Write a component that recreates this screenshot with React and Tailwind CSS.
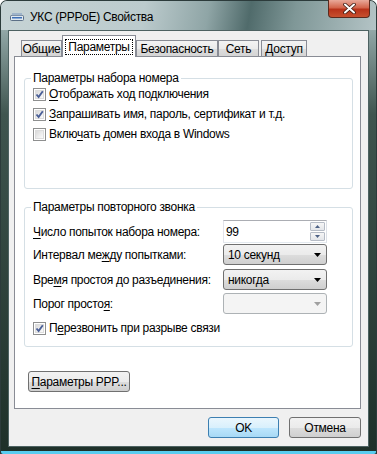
import React from 'react';

// access-key label: underline one letter
const Key = ({ text, at }) => (
  <>
    {text.slice(0, at)}
    <span className="underline underline-offset-[2px]">{text[at]}</span>
    {text.slice(at + 1)}
  </>
);

const Check = ({ checked, label }) => (
  <div className="flex h-5 items-center">
    <div className="flex h-[13px] w-[13px] items-center justify-center border border-[#8e8f8f] bg-white">
      <div className="relative h-[9px] w-[9px] border border-[#dcdcdc] bg-[linear-gradient(135deg,#dadada,#fbfbfb)]">
        {checked && (
          <svg className="absolute -left-[2px] -top-[2px]" width="11" height="11" viewBox="0 0 11 11">
            <path d="M2.5 5.5 L4.6 8 L8.8 2.2" fill="none" stroke="#4a5f97" strokeWidth="1.9" />
          </svg>
        )}
      </div>
    </div>
    <span className="ml-[3px]">{label}</span>
  </div>
);

const Tab = ({ children, active, className = '' }) =>
  active ? (
    <div className={`relative z-10 -mb-px flex h-[22px] items-center justify-center border border-b-0 border-[#898c95] bg-white ${className}`}>
      <span className="border border-dotted border-black px-[2px] leading-[14px]">{children}</span>
    </div>
  ) : (
    <div className={`mt-[5px] flex h-[16px] items-center justify-center border border-b-0 border-[#898c95] bg-[linear-gradient(#f3f3f3,#ebebeb_50%,#dedede_51%,#d4d4d4)] ${className}`}>
      {children}
    </div>
  );

const Combo = ({ value, disabled }) =>
  disabled ? (
    <div className="flex h-[21px] w-[104px] items-center justify-end rounded-[3px] border border-[#adb2b5] bg-[#f4f4f4] pr-[5px]">
      <svg width="7" height="4" viewBox="0 0 7 4"><path d="M0 0H7L3.5 4Z" fill="#a0a0a0" /></svg>
    </div>
  ) : (
    <div className="flex h-[21px] w-[104px] items-center justify-between rounded-[3px] border border-[#707070] bg-[linear-gradient(#f2f2f2,#ebebeb_50%,#dddddd_51%,#cfcfcf)] pl-[4px] pr-[5px]">
      <span>{value}</span>
      <svg width="7" height="4" viewBox="0 0 7 4"><path d="M0 0H7L3.5 4Z" fill="#000" /></svg>
    </div>
  );

const Button = ({ children, primary, className = '' }) => (
  <div
    className={`flex h-[21px] items-center justify-center rounded-[3px] border ${
      primary
        ? 'border-[#3c7fb1] bg-[linear-gradient(#eaf6fd,#d9f0fc_50%,#bee6fd_51%,#a7d9f5)]'
        : 'border-[#707070] bg-[linear-gradient(#f2f2f2,#ebebeb_50%,#dddddd_51%,#cfcfcf)]'
    } ${className}`}
  >
    {children}
  </div>
);

const Spin = () => (
  <div className="flex h-[23px] w-[104px] items-center border border-[#abadb3] border-b-[#e3e9ef] border-l-[#e2e3ea] border-r-[#dbdfe6] bg-white pl-[2px]">
    <span className="flex-1">99</span>
    <div className="mr-[1px] flex flex-col gap-px">
      {[0, 1].map((i) => (
        <div key={i} className="flex h-[9px] w-[15px] items-center justify-center rounded-[1px] border border-[#b6bcc6] bg-[linear-gradient(#f6f6f6,#e4e6ea)]">
          <svg width="5" height="3" viewBox="0 0 5 3">
            <path d={i === 0 ? 'M0 3H5L2.5 0Z' : 'M0 0H5L2.5 3Z'} fill="#4d6185" />
          </svg>
        </div>
      ))}
    </div>
  </div>
);

const Row = ({ label, children, className = '' }) => (
  <div className={`flex items-center justify-between pr-[25px] ${className}`}>
    <span>{label}</span>
    {children}
  </div>
);

export default function App() {
  return (
    <div className="h-[454px] w-[377px] overflow-hidden bg-white font-['Liberation_Sans',Arial,sans-serif] text-[12px] tracking-[-0.3px] text-black">
      <div className="flex h-[454px] w-[377px] flex-col rounded-t-[7px] border border-b-0 border-[#2c3b3b] bg-[linear-gradient(180deg,#b7c7c9_0%,#8aa09f_8%,#3f554f_25%,#1e3029_100%)]">
        {/* title bar */}
        <div className="relative flex h-[29px] shrink-0 items-center rounded-t-[6px] bg-[linear-gradient(100deg,#c6d3d5_0%,#bccbcd_38%,#8fa5a6_55%,#506b6b_66%,#7f9797_78%,#b4c4c6_100%)] pl-[9px]">
          <svg width="14" height="10" viewBox="0 0 14 10" className="mt-[2px]">
            <rect x="0.5" y="3.5" width="13" height="5" rx="1" fill="#dfe8ef" stroke="#5c6f86" />
            <rect x="2" y="1" width="10" height="2.5" fill="#9fb4ca" />
            <rect x="2" y="5" width="10" height="1.5" fill="#3d6fb7" />
          </svg>
          <span className="ml-[6px] mt-[2px]">УКС (PPPoE) Свойства</span>
          <div className="absolute right-[6px] top-[-1px] flex h-[18px] w-[42px] items-center justify-center rounded-b-[4px] border border-t-0 border-[#5b2a1e] bg-[linear-gradient(#e9a99a,#d3654c_45%,#b8321a_55%,#c7502f)]">
            <svg width="13" height="11" viewBox="0 0 13 11">
              <path d="M2 1.5 L11 9.5 M11 1.5 L2 9.5" stroke="#3a1a12" strokeWidth="3.6" strokeLinecap="round" />
              <path d="M2 1.5 L11 9.5 M11 1.5 L2 9.5" stroke="#fff" strokeWidth="2" strokeLinecap="round" />
            </svg>
          </div>
        </div>

        {/* client area */}
        <div className="mx-[7px] flex h-[417px] flex-col border border-[#4d6262] bg-[#f0f0f0] pl-[5px] pt-[4px]">
          {/* tabs */}
          <div className="flex h-[21px] items-start pl-[7px]">
            <Tab className="w-[41px]">Общие</Tab>
            <Tab active className="w-[74px]">Параметры</Tab>
            <Tab className="w-[82px]">Безопасность</Tab>
            <Tab className="w-[41px]">Сеть</Tab>
            <Tab className="ml-[2px] w-[46px]">Доступ</Tab>
          </div>

          {/* tab page */}
          <div className="flex h-[353px] w-[347px] flex-col border border-[#898c95] bg-white pt-[15px]">
            <fieldset className="ml-[9px] h-[117px] w-[329px] rounded-[3px] border border-[#d5dfe5]">
              <legend className="ml-[6px] px-[2px] leading-[12px]">Параметры набора номера</legend>
              <div className="pl-[8px]">
                <Check checked label={<Key text="Отображать ход подключения" at={0} />} />
                <Check checked label={<Key text="Запрашивать имя, пароль, сертификат и т.д." at={0} />} />
                <Check label={<Key text="Включать домен входа в Windows" at={4} />} />
              </div>
            </fieldset>

            <fieldset className="ml-[9px] mt-[12px] h-[146px] w-[329px] rounded-[3px] border border-[#d5dfe5]">
              <legend className="ml-[6px] px-[2px] leading-[12px]">Параметры повторного звонка</legend>
              <div className="pl-[8px] pt-[7px]">
                <Row label={<Key text="Число попыток набора номера:" at={0} />}>
                  <Spin />
                </Row>
                <Row className="mt-[1px]" label={<Key text="Интервал между попытками:" at={11} />}>
                  <Combo value="10 секунд" />
                </Row>
                <Row className="mt-[4px]" label={<Key text="Время простоя до разъединения:" at={3} />}>
                  <Combo value="никогда" />
                </Row>
                <Row className="mt-[3px]" label={<Key text="Порог простоя:" at={12} />}>
                  <Combo disabled />
                </Row>
                <div className="mt-[4px]">
                  <Check checked label={<Key text="Перезвонить при разрыве связи" at={1} />} />
                </div>
              </div>
            </fieldset>

            <Button className="ml-[13px] mt-[24px] w-[102px]">
              <Key text="Параметры PPP..." at={0} />
            </Button>
          </div>

          {/* dialog buttons */}
          <div className="mt-[8px] flex justify-end gap-[10px] pr-[7px]">
            <Button primary className="w-[71px]">OK</Button>
            <Button className="w-[72px]">Отмена</Button>
          </div>
        </div>

        <div className="mt-auto h-[3px] rounded-b-[2px] bg-[#59cdf0]" />
      </div>
    </div>
  );
}
